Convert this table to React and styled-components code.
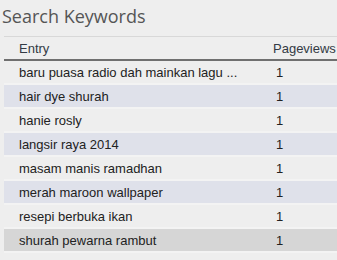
import React from "react";
import styled, { createGlobalStyle } from "styled-components";

const GlobalStyle = createGlobalStyle`
  html, body {
    margin: 0;
    padding: 0;
    background: #eeeeee;
  }
  body {
    width: 337px;
    height: 260px;
    overflow: hidden;
  }
`;

const Widget = styled.section`
  padding: 3px 0 0 0;
  font-family: "Liberation Sans", Arial, sans-serif;
`;

const Title = styled.h2`
  margin: 0 0 0 2px;
  height: 33px;
  font-family: "Open Sans", "DejaVu Sans", sans-serif;
  font-weight: 400;
  font-size: 18px;
  line-height: 26px;
  color: #555555;
`;

const Table = styled.div`
  margin-left: 4px;
  width: 345px;
  border-top: 1px solid #d8d8d8;
`;

const Row = styled.div`
  display: grid;
  grid-template-columns: 264px 1fr;
  align-items: center;
  height: 22px;
  font-size: 13px;
  color: #222222;
  background: ${(p) => p.bg || "transparent"};
  border-bottom: 2px solid ${(p) => (p.head ? "#6f6f6f" : "#f3f3f3")};
`;

const Cell = styled.div`
  padding-left: ${(p) => p.pad || 15}px;
  white-space: nowrap;
  overflow: hidden;
  color: ${(p) => (p.head ? "#333a44" : "#222222")};
`;

const rows = [
  "baru puasa radio dah mainkan lagu ...",
  "hair dye shurah",
  "hanie rosly",
  "langsir raya 2014",
  "masam manis ramadhan",
  "merah maroon wallpaper",
  "resepi berbuka ikan",
  "shurah pewarna rambut",
];

export default function App() {
  return (
    <>
      <GlobalStyle />
      <Widget>
        <Title>Search Keywords</Title>
        <Table>
          <Row head>
            <Cell head>Entry</Cell>
            <Cell head pad={5}>Pageviews</Cell>
          </Row>
          {rows.map((r, i) => (
            <Row
              key={r}
              bg={i === rows.length - 1 ? "#d6d6d6" : i % 2 === 1 ? "#dfe1ea" : undefined}
            >
              <Cell>{r}</Cell>
              <Cell pad={8}>1</Cell>
            </Row>
          ))}
        </Table>
      </Widget>
    </>
  );
}
